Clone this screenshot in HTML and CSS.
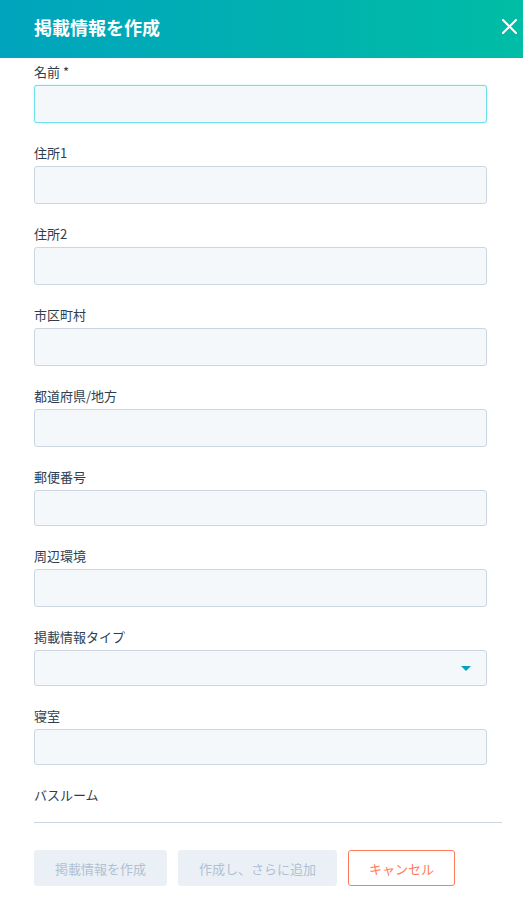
FILE: index.html
```html
<!DOCTYPE html>
<html lang="ja">
<head>
<meta charset="utf-8">
<title>掲載情報を作成</title>
<link rel="stylesheet" href="styles.css">
</head>
<body>
<div class="panel">
  <header class="header">
    <h1 class="title">掲載情報を作成</h1>
    <button class="close" aria-label="閉じる">
      <svg width="15" height="15" viewBox="0 0 15 15"><path d="M1 1 L14 14 M14 1 L1 14" stroke="#fff" stroke-width="2" stroke-linecap="square" fill="none"/></svg>
    </button>
  </header>
  <form class="form">
    <div class="field">
      <label class="label">名前 *</label>
      <div class="input focused"></div>
    </div>
    <div class="field">
      <label class="label">住所1</label>
      <div class="input"></div>
    </div>
    <div class="field">
      <label class="label">住所2</label>
      <div class="input"></div>
    </div>
    <div class="field">
      <label class="label">市区町村</label>
      <div class="input"></div>
    </div>
    <div class="field">
      <label class="label">都道府県/地方</label>
      <div class="input"></div>
    </div>
    <div class="field">
      <label class="label">郵便番号</label>
      <div class="input short"></div>
    </div>
    <div class="field">
      <label class="label">周辺環境</label>
      <div class="input"></div>
    </div>
    <div class="field">
      <label class="label">掲載情報タイプ</label>
      <div class="input short select">
        <span class="caret"></span>
      </div>
    </div>
    <div class="field">
      <label class="label">寝室</label>
      <div class="input short"></div>
    </div>
    <div class="field last">
      <label class="label">バスルーム</label>
    </div>
  </form>
  <footer class="footer">
    <button class="btn disabled">掲載情報を作成</button>
    <button class="btn disabled">作成し、さらに追加</button>
    <button class="btn cancel">キャンセル</button>
  </footer>
</div>
</body>
</html>
```
FILE: styles.css
```css
* { box-sizing: border-box; }
html, body {
  margin: 0;
  padding: 0;
  background: #fff;
  font-family: "Noto Sans CJK JP", "Noto Sans", sans-serif;
  color: #33475b;
}
.panel {
  width: 523px;
  height: 898px;
  overflow: hidden;
}
.header {
  height: 58px;
  background: linear-gradient(90deg, #00a4bd 0%, #00bda5 100%);
  display: flex;
  align-items: center;
  justify-content: space-between;
  padding: 0 6px 0 34px;
}
.title {
  margin: 0;
  font-size: 18px;
  font-weight: 700;
  color: #fff;
  line-height: 24px;
  margin-top: -4px;
}
.close {
  background: none;
  border: 0;
  padding: 0;
  width: 15px;
  height: 15px;
  display: flex;
  margin-top: -6px;
}
.form {
  padding: 4px 36px 0 34px;
  display: flex;
  flex-direction: column;
  gap: 20px;
}
.field {
  display: flex;
  flex-direction: column;
}
.label {
  font-size: 13px;
  line-height: 20px;
  height: 20px;
  margin-bottom: 3px;
  color: #2d3e50;
}
.input {
  height: 38px;
  background: #f5f8fa;
  border: 1px solid #cbd6e2;
  border-radius: 3px;
}
.input.short { height: 36px; }
.input.focused {
  border-color: #6fe0ec;
  box-shadow: 0 0 2px 0 rgba(0, 208, 228, 0.35);
}
.select {
  display: flex;
  align-items: center;
  justify-content: flex-end;
  padding-right: 15px;
}
.caret {
  width: 0;
  height: 0;
  border-left: 5px solid transparent;
  border-right: 5px solid transparent;
  border-top: 5px solid #00a4bd;
  margin-top: 1px;
}
.field.last .label { margin-bottom: 0; }
.footer {
  margin: 17px 21px 0 34px;
  border-top: 1px solid #cbd6e2;
  padding-top: 27px;
  display: flex;
  gap: 11px;
}
.btn {
  height: 36px;
  padding: 0 20px;
  font-family: "Noto Sans CJK JP", "Noto Sans", sans-serif;
  font-size: 13px;
  border-radius: 3px;
  border: 1px solid #eaf0f6;
  background: #eaf0f6;
  color: #b0c1d4;
  cursor: default;
}
.btn.cancel {
  background: #fff;
  border-color: #ff7a59;
  color: #ff7a59;
}
```
